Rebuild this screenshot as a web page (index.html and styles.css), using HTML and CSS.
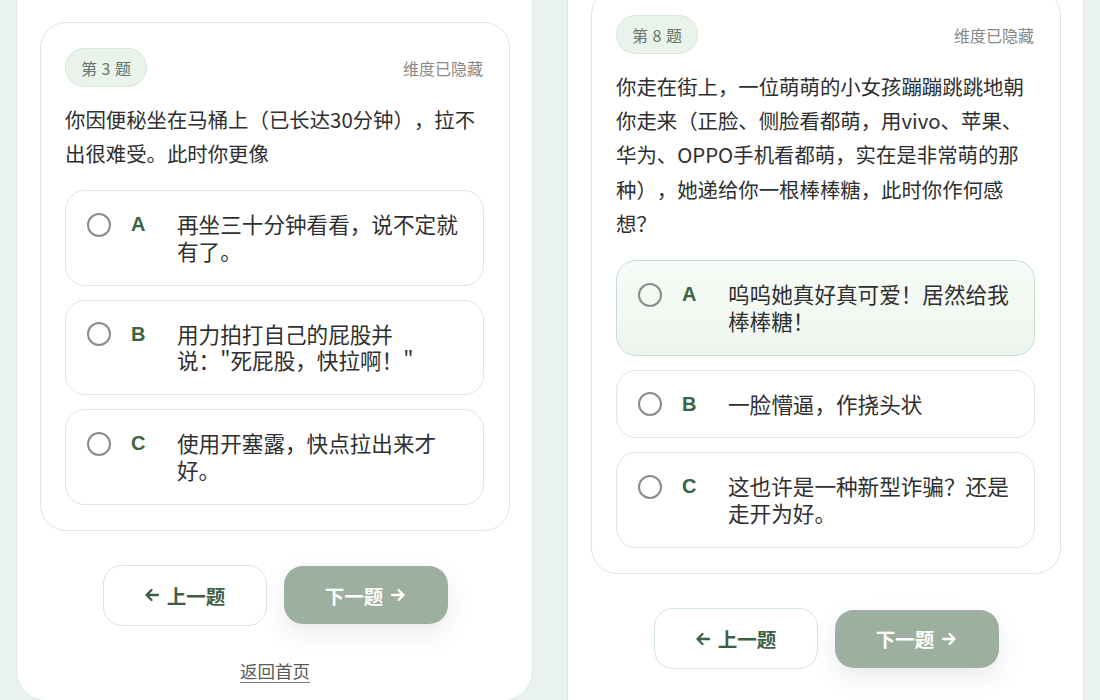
FILE: index.html
```html
<!DOCTYPE html>
<html lang="zh-CN">
<head>
<meta charset="utf-8">
<title>测试题</title>
<link rel="stylesheet" href="styles.css">
</head>
<body>
<div class="stage">
  <section class="phone phone-left">
    <div class="card">
      <div class="card-head">
        <span class="badge">第 3 题</span>
        <span class="hidden-note">维度已隐藏</span>
      </div>
      <p class="question">你因便秘坐在马桶上（已长达30分钟），拉不出很难受。此时你更像</p>
      <ul class="options">
        <li class="option"><span class="radio"></span><span class="letter">A</span><span class="text">再坐三十分钟看看，说不定就有了。</span></li>
        <li class="option"><span class="radio"></span><span class="letter">B</span><span class="text">用力拍打自己的屁股并说："死屁股，快拉啊！"</span></li>
        <li class="option"><span class="radio"></span><span class="letter">C</span><span class="text">使用开塞露，快点拉出来才好。</span></li>
      </ul>
    </div>
    <div class="nav">
      <button class="btn btn-prev" type="button"><svg class="arrow" viewBox="0 0 16 16" width="16" height="16"><path d="M14 8H2.5M7.5 3L2.5 8l5 5" fill="none" stroke="currentColor" stroke-width="2.3" stroke-linecap="round" stroke-linejoin="round"/></svg>上一题</button>
      <button class="btn btn-next" type="button">下一题<svg class="arrow" viewBox="0 0 16 16" width="16" height="16"><path d="M2 8h11.5M8.5 3l5 5-5 5" fill="none" stroke="currentColor" stroke-width="2.3" stroke-linecap="round" stroke-linejoin="round"/></svg></button>
    </div>
    <a class="home-link" href="#">返回首页</a>
  </section>

  <section class="phone phone-right">
    <div class="card">
      <div class="card-head">
        <span class="badge">第 8 题</span>
        <span class="hidden-note">维度已隐藏</span>
      </div>
      <p class="question question-long">你走在街上，一位萌萌的小女孩蹦蹦跳跳地朝你走来（正脸、侧脸看都萌，用vivo、苹果、华为、OPPO手机看都萌，实在是非常萌的那种），她递给你一根棒棒糖，此时你作何感想？</p>
      <ul class="options">
        <li class="option option-active"><span class="radio"></span><span class="letter">A</span><span class="text">呜呜她真好真可爱！居然给我棒棒糖！</span></li>
        <li class="option"><span class="radio"></span><span class="letter">B</span><span class="text">一脸懵逼，作挠头状</span></li>
        <li class="option"><span class="radio"></span><span class="letter">C</span><span class="text">这也许是一种新型诈骗？还是走开为好。</span></li>
      </ul>
    </div>
    <div class="nav">
      <button class="btn btn-prev" type="button"><svg class="arrow" viewBox="0 0 16 16" width="16" height="16"><path d="M14 8H2.5M7.5 3L2.5 8l5 5" fill="none" stroke="currentColor" stroke-width="2.3" stroke-linecap="round" stroke-linejoin="round"/></svg>上一题</button>
      <button class="btn btn-next" type="button">下一题<svg class="arrow" viewBox="0 0 16 16" width="16" height="16"><path d="M2 8h11.5M8.5 3l5 5-5 5" fill="none" stroke="currentColor" stroke-width="2.3" stroke-linecap="round" stroke-linejoin="round"/></svg></button>
    </div>
  </section>
</div>
</body>
</html>
```

FILE: styles.css
```css
* {
  box-sizing: border-box;
}

html,
body {
  margin: 0;
  padding: 0;
  height: 700px;
  overflow: hidden;
  background: #e9f2ec;
}

body {
  font-family: "Noto Sans CJK SC", "Noto Sans", sans-serif;
  color: #333;
  text-spacing-trim: space-all;
}

.stage {
  display: flex;
  align-items: flex-start;
  gap: 34px;
  padding: 0 16px;
}

.phone {
  width: 517px;
  flex: none;
  background: #fff;
  border: 1px solid #e0ebe3;
  border-top: none;
  border-radius: 0 0 30px 30px;
  padding: 22px 22px 17px 23px;
  display: flex;
  flex-direction: column;
  align-items: center;
}

.phone-right {
  margin-top: -33px;
  padding-bottom: 120px;
}

.card {
  width: 100%;
  background: #fff;
  border: 1px solid #dce9df;
  border-radius: 26px;
  padding: 25px 25px 25px 24px;
}

.card-head {
  display: flex;
  align-items: center;
  justify-content: space-between;
}

.badge {
  display: inline-flex;
  align-items: center;
  justify-content: center;
  height: 39px;
  width: 82px;
  border-radius: 20px;
  background: #e9f3eb;
  border: 1px solid #d4e7d8;
  color: #66746a;
  font-size: 16px;
  word-spacing: 1px;
}

.hidden-note {
  color: #888;
  font-size: 16px;
  margin-right: 1px;
}

.question {
  margin: 15px 0 0;
  font-size: 20.4px;
  line-height: 34px;
  color: #2f2f2f;
}

.question-long {
  line-height: 34.2px;
}

.options {
  list-style: none;
  margin: 20px 0 0;
  padding: 0;
  display: flex;
  flex-direction: column;
  gap: 14px;
}

.option {
  display: flex;
  align-items: flex-start;
  border: 1px solid #dce9df;
  border-radius: 20px;
  background: #fff;
  padding: 20px 23px 20px 21px;
}

.option-active {
  background: linear-gradient(180deg, #f7fbf7 0%, #eef5ef 100%);
  border-color: #c9ddcd;
}

.radio {
  flex: none;
  width: 24px;
  height: 24px;
  margin-top: 1.5px;
  border: 2px solid #8b8b8b;
  border-radius: 50%;
  background: #fff;
}

.option-active .radio {
  background: transparent;
}

.letter {
  flex: none;
  width: 46px;
  margin-left: 20px;
  font-family: "Liberation Sans", Arial, sans-serif;
  font-weight: 700;
  font-size: 20px;
  line-height: 26.8px;
  color: #3b6443;
}

.text {
  flex: 1;
  font-size: 21.6px;
  line-height: 26.8px;
  color: #2f2f2f;
}

.nav {
  display: flex;
  align-items: center;
  gap: 17px;
  margin-top: 34px;
}

.btn {
  width: 164px;
  border-radius: 19px;
  display: inline-flex;
  align-items: center;
  justify-content: center;
  gap: 7px;
  font-family: "Noto Sans CJK SC", sans-serif;
  font-weight: 700;
  font-size: 19.5px;
  cursor: pointer;
}

.btn-prev {
  height: 61px;
  background: #fff;
  border: 1px solid #d4e7d9;
  color: #3d6044;
}

.btn-next {
  height: 58px;
  background: #9db09f;
  border: none;
  color: #fff;
  box-shadow: 0 10px 24px rgba(70, 90, 72, 0.12);
}

.arrow {
  display: block;
}

.home-link {
  margin-top: 33px;
  font-size: 17.5px;
  line-height: 24px;
  color: #5a5a5a;
  text-decoration: underline;
  text-underline-offset: 4px;
  text-decoration-color: #777;
}
```
